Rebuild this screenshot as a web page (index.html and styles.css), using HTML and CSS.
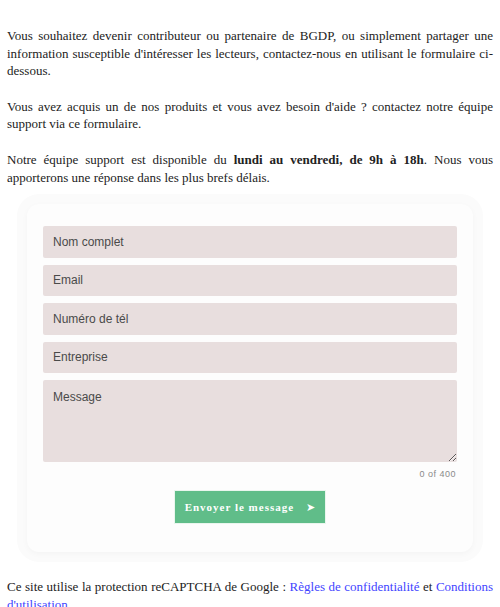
FILE: index.html
```html
<!DOCTYPE html>
<html lang="fr">

<head>
    <meta charset="UTF-8">
    <meta name="viewport" content="width=device-width, initial-scale=1.0">
    <title>Contact BGDP</title>
    <link rel="stylesheet" href="styles.css">
</head>

<body>
    <div class="page">
        <p>Vous souhaitez devenir contributeur ou partenaire de BGDP, ou simplement partager une information susceptible d'intéresser les lecteurs, contactez-nous en utilisant le formulaire ci-dessous.</p>
        <p>Vous avez acquis un de nos produits et vous avez besoin d'aide ? contactez notre équipe support via ce formulaire.</p>
        <p>Notre équipe support est disponible du <strong>lundi au vendredi, de 9h à 18h</strong>. Nous vous apporterons une réponse dans les plus brefs délais.</p>

        <div class="form-wrap">
            <form class="contact-form">
                <input type="text" placeholder="Nom complet">
                <input type="email" placeholder="Email">
                <input type="tel" placeholder="Numéro de tél">
                <input type="text" placeholder="Entreprise">
                <textarea placeholder="Message" maxlength="400"></textarea>
                <div class="counter">0 of 400</div>
                <div class="submit-row">
                    <button type="button">Envoyer le message <span class="arrow">&#10148;</span></button>
                </div>
            </form>
        </div>

        <p class="recaptcha">Ce site utilise la protection reCAPTCHA de Google : <a href="#">Règles de confidentialité</a> et <a href="#">Conditions d'utilisation</a></p>
    </div>
</body>

</html>
```

FILE: styles.css
```css
body {
    margin: 0;
    background-color: #fff;
    color: #222;
    font-family: "Liberation Serif", "DejaVu Serif", serif;
}

.page {
    padding: 27px 7px 0 7px;
}

p {
    margin: 0 0 18px 0;
    font-size: 13px;
    line-height: 17.6px;
    text-align: justify;
}

strong {
    font-weight: bold;
}

/* Form card */
.form-wrap {
    margin: -10px 10px 0 10px;
    padding: 10px;
    border-radius: 22px;
    background-color: #fbfbfb;
}

.contact-form {
    display: flex;
    flex-direction: column;
    gap: 7px;
    padding: 22px 16px 28px 16px;
    background-color: #fdfdfd;
    border-radius: 12px;
    box-shadow: 0 2px 6px rgba(0, 0, 0, 0.03);
}

input,
textarea {
    display: block;
    width: 100%;
    box-sizing: border-box;
    height: 31.5px;
    padding: 0 10px;
    border: none;
    border-radius: 2px;
    background-color: #e8dede;
    font-family: "Liberation Sans", Arial, sans-serif;
    font-size: 12px;
    color: #333;
}

textarea {
    height: 82px;
    padding: 10px 10px;
    resize: vertical;
}

input::placeholder,
textarea::placeholder {
    color: #4a4a4a;
}

.counter {
    text-align: right;
    font-family: "Liberation Sans", Arial, sans-serif;
    font-size: 9px;
    letter-spacing: 0.5px;
    color: #8a8a8a;
    padding-right: 1px;
}

.submit-row {
    display: flex;
    justify-content: center;
    margin-top: 4px;
}

button {
    display: flex;
    align-items: center;
    justify-content: center;
    gap: 12px;
    height: 34px;
    width: 152px;
    padding: 0;
    border: 1px solid #eaf6ee;
    background-color: #60bd89;
    color: #fff;
    font-family: "Liberation Serif", "DejaVu Serif", serif;
    font-size: 11px;
    font-weight: bold;
    letter-spacing: 1px;
    white-space: nowrap;
    cursor: pointer;
}

.arrow {
    font-family: "DejaVu Sans", sans-serif;
    font-size: 11px;
    letter-spacing: 0;
}

.recaptcha {
    margin-top: 16px;
}

a {
    color: #3f44ff;
    text-decoration: none;
}
```
